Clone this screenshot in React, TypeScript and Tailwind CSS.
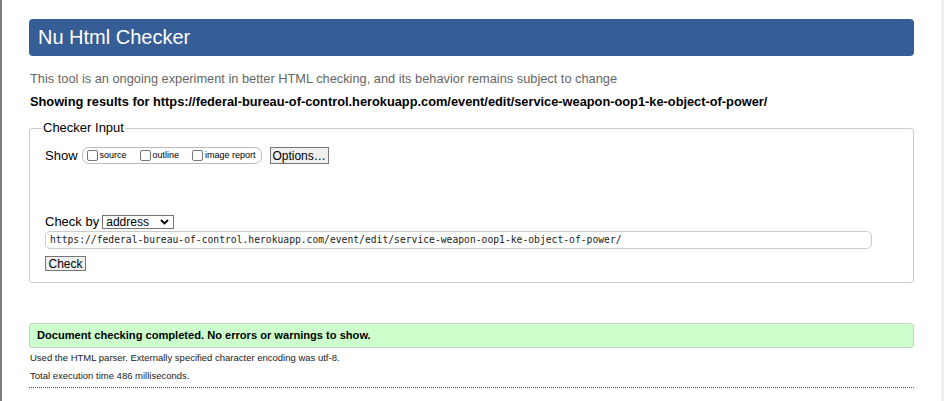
const url =
  'https://federal-bureau-of-control.herokuapp.com/event/edit/service-weapon-oop1-ke-object-of-power/';

function Checkbox({ label }: { label: string }) {
  return (
    <label className="flex items-center gap-[2px]">
      <span className="inline-block w-[11px] h-[11px] border border-[#767676] rounded-[2px] bg-white" />
      <span className="text-[9px] leading-none">{label}</span>
    </label>
  );
}

export default function App() {
  return (
    <div
      className="flex w-[944px] h-[401px] bg-white text-black overflow-hidden"
      style={{ fontFamily: '"Liberation Sans", Arial, sans-serif' }}
    >
      <div className="w-[2px] bg-[#7d7d7d]" />
      <main className="flex-1 px-[27px] pt-[19px]">
        <h1 className="h-[37px] rounded-[4px] bg-[#365d95] px-[9px] text-[20px] leading-[37px] text-white">
          Nu Html Checker
        </h1>
        <p className="mt-[15px] pl-[1px] text-[12.8px] leading-[16px] text-[#666]">
          This tool is an ongoing experiment in better HTML checking, and its behavior remains
          subject to change
        </p>
        <p className="mt-[7px] pl-[1px] text-[12.8px] font-bold leading-[16px]">
          Showing results for {url}
        </p>

        <fieldset className="mt-[10px] rounded-[3px] border border-[#ccc] px-[15px] pb-[11px]">
          <legend className="ml-[-3px] px-[1px] text-[13px] leading-[16px]">Checker Input</legend>
          <div className="mt-[11px] flex items-center">
            <span className="text-[13px] leading-[16px]">Show</span>
            <div className="ml-[4px] flex h-[17px] items-center gap-[13px] rounded-[7px] border border-[#bbb] pl-[4px] pr-[5px]">
              <Checkbox label="source" />
              <Checkbox label="outline" />
              <Checkbox label="image report" />
            </div>
            <button className="ml-[8px] h-[17px] w-[59px] border border-[#767676] bg-[#efefef] text-[12px] leading-none">
              Options…
            </button>
          </div>

          <div className="mt-[50px] flex items-center">
            <span className="text-[13px] leading-[16px]">Check by</span>
            <div className="ml-[3px] flex h-[14px] w-[72px] items-center justify-between border border-[#767676] pl-[3px] pr-[4px]">
              <span className="text-[12px] leading-none">address</span>
              <svg width="9" height="6" viewBox="0 0 9 6">
                <path d="M1 1l3.5 3.5L8 1" fill="none" stroke="#000" strokeWidth="1.8" />
              </svg>
            </div>
          </div>
          <div
            className="mt-[1px] flex h-[18px] w-[827px] items-center rounded-[5px] border border-[#ccc] px-[4px] text-[9.7px] text-[#222]"
            style={{ fontFamily: '"DejaVu Sans Mono", monospace' }}
          >
            {url}
          </div>
          <button className="mt-[7px] block h-[15px] w-[41px] border border-[#767676] bg-[#efefef] text-[12px] leading-none">
            Check
          </button>
        </fieldset>

        <div className="mt-[40px] h-[25px] rounded-[3px] border border-[#ccc] bg-[#ccffcc] px-[7px] text-[11.1px] font-bold leading-[23px]">
          Document checking completed. No errors or warnings to show.
        </div>
        <p className="mt-[4px] pl-[1px] text-[9.5px] leading-[11px] text-[#222]">
          Used the HTML parser. Externally specified character encoding was utf-8.
        </p>
        <p className="mt-[7px] pl-[1px] text-[9.5px] leading-[11px] text-[#222]">
          Total execution time 486 milliseconds.
        </p>
        <div className="mt-[6px] border-b border-dotted border-[#555]" />
      </main>
      <div className="w-[3px] bg-[#f0f0f0]" />
    </div>
  );
}
